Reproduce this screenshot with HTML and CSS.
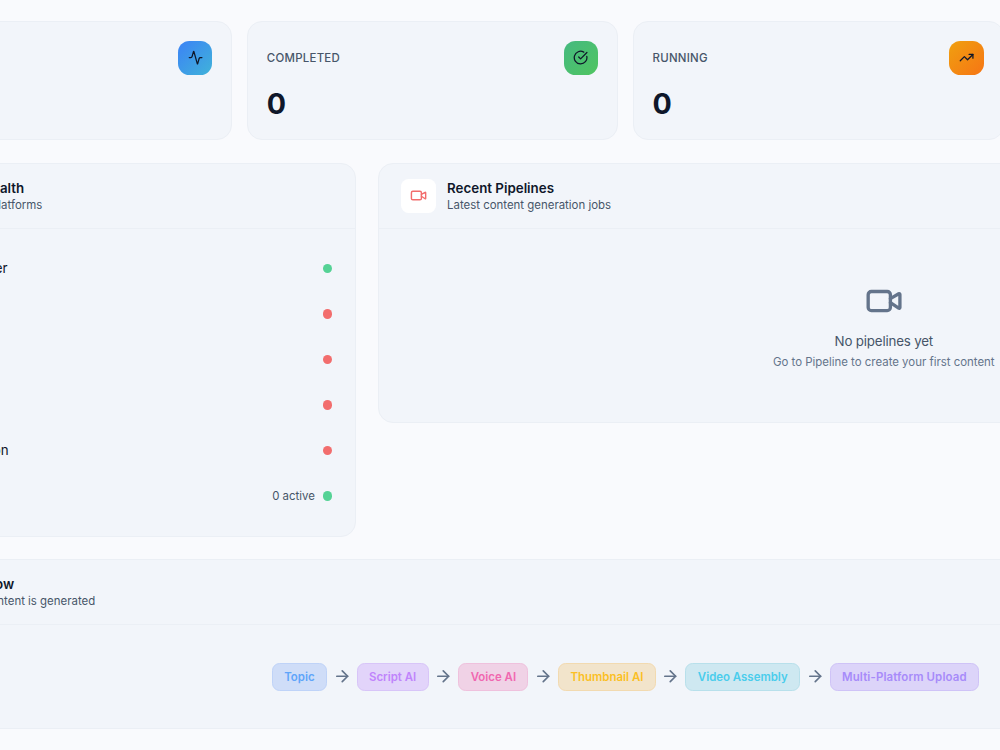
FILE: index.html
```html
<!DOCTYPE html>
<html lang="en">
<head>
    <meta charset="UTF-8">
    <meta name="viewport" content="width=device-width, initial-scale=1.0">
    <title>Dashboard</title>
    <link rel="stylesheet" href="styles.css">
</head>
<body>

    <main class="dashboard">
        <section class="stats">
            <div class="card stat">
                <div class="stat-icon blue">
                    <svg class="icon" viewBox="0 0 24 24"><path d="M22 12h-2.48a2 2 0 0 0-1.93 1.46l-2.35 8.36a.25.25 0 0 1-.48 0L9.24 2.18a.25.25 0 0 0-.48 0l-2.35 8.36A2 2 0 0 1 4.49 12H2"/></svg>
                </div>
            </div>
            <div class="card stat">
                <div>
                    <div class="stat-label">COMPLETED</div>
                    <div class="stat-value">0</div>
                </div>
                <div class="stat-icon green">
                    <svg class="icon" viewBox="0 0 24 24"><path d="M21.801 10A10 10 0 1 1 17 3.335"/><path d="m9 11 3 3L22 4"/></svg>
                </div>
            </div>
            <div class="card stat">
                <div>
                    <div class="stat-label">RUNNING</div>
                    <div class="stat-value">0</div>
                </div>
                <div class="stat-icon orange">
                    <svg class="icon" viewBox="0 0 24 24"><path d="M16 7h6v6"/><path d="m22 7-8.5 8.5-5-5L2 17"/></svg>
                </div>
            </div>
        </section>

        <section class="panels">
            <div class="card">
                <header class="panel-header">
                    <div class="panel-icon"></div>
                    <div>
                        <h2>System Health</h2>
                        <p class="tight">Connected platforms</p>
                    </div>
                </header>
                <ul class="health">
                    <li><span class="name">Server</span><span class="dot ok"></span></li>
                    <li><span class="dot"></span></li>
                    <li><span class="dot"></span></li>
                    <li><span class="dot"></span></li>
                    <li><span class="name last">Automation</span><span class="dot"></span></li>
                    <li><span class="count">0 active</span><span class="dot ok"></span></li>
                </ul>
            </div>

            <div class="card recent">
                <header class="panel-header">
                    <div class="panel-icon">
                        <svg class="icon" viewBox="0 0 24 24"><path d="m16 13 5.223 3.482a.5.5 0 0 0 .777-.416V7.87a.5.5 0 0 0-.752-.432L16 10.5"/><rect x="2" y="6" width="14" height="12" rx="2"/></svg>
                    </div>
                    <div>
                        <h2>Recent Pipelines</h2>
                        <p>Latest content generation jobs</p>
                    </div>
                </header>
                <div class="empty">
                    <svg class="icon" viewBox="0 0 24 24"><path d="m16 13 5.223 3.482a.5.5 0 0 0 .777-.416V7.87a.5.5 0 0 0-.752-.432L16 10.5"/><rect x="2" y="6" width="14" height="12" rx="2"/></svg>
                    <div class="empty-title">No pipelines yet</div>
                    <div class="empty-text">Go to Pipeline to create your first content</div>
                </div>
            </div>
        </section>

        <section class="card">
            <header class="panel-header">
                <div class="panel-icon"></div>
                <div>
                    <h2 class="tight">Pipeline Flow</h2>
                    <p class="tight">How your content is generated</p>
                </div>
            </header>
            <div class="flow">
                <span class="step topic">Topic</span>
                <svg class="icon arrow" viewBox="0 0 24 24"><path d="M5 12h14"/><path d="m12 5 7 7-7 7"/></svg>
                <span class="step script">Script AI</span>
                <svg class="icon arrow" viewBox="0 0 24 24"><path d="M5 12h14"/><path d="m12 5 7 7-7 7"/></svg>
                <span class="step voice">Voice AI</span>
                <svg class="icon arrow" viewBox="0 0 24 24"><path d="M5 12h14"/><path d="m12 5 7 7-7 7"/></svg>
                <span class="step thumbnail">Thumbnail AI</span>
                <svg class="icon arrow" viewBox="0 0 24 24"><path d="M5 12h14"/><path d="m12 5 7 7-7 7"/></svg>
                <span class="step video">Video Assembly</span>
                <svg class="icon arrow" viewBox="0 0 24 24"><path d="M5 12h14"/><path d="m12 5 7 7-7 7"/></svg>
                <span class="step upload">Multi-Platform Upload</span>
            </div>
        </section>
    </main>

</body>
</html>
```

FILE: styles.css
```css
* {
    box-sizing: border-box;
}

body {
    margin: 0;
    height: 750px;
    overflow: hidden;
    background-color: #f9fafd;
    color: #0f172a;
    font-family: Inter, "Liberation Sans", sans-serif;
}

h2, p, ul {
    margin: 0;
    padding: 0;
}

.dashboard {
    display: flex;
    flex-direction: column;
    gap: 22.8px;
    width: 1527.6px;
    margin-left: -138.4px;
    padding-top: 21.3px;
}

.card {
    background-color: #f2f5fa;
    border: 1px solid #ebeff5;
    border-radius: 15px;
}

.icon {
    display: block;
    width: 15.2px;
    height: 15.2px;
    fill: none;
    stroke: currentColor;
    stroke-width: 2;
    stroke-linecap: round;
    stroke-linejoin: round;
}

/* stats */

.stats {
    display: grid;
    grid-template-columns: repeat(4, 1fr);
    gap: 15.2px;
}

.stat {
    display: flex;
    justify-content: space-between;
    height: 119px;
    padding: 18.5px 18.8px 0 18.5px;
}

.stat-label {
    color: #475569;
    font-size: 11.43px;
    font-weight: 500;
    letter-spacing: 0.27px;
    line-height: 34.6px;
}

.stat-value {
    margin-top: 11px;
    font-size: 28.6px;
    font-weight: 700;
    line-height: 36px;
}

.stat-icon {
    display: flex;
    align-items: center;
    justify-content: center;
    width: 34.3px;
    height: 34.3px;
    margin-left: auto;
    border-radius: 11.4px;
}

.blue {
    background: linear-gradient(135deg, #3b82f6, #40b3d9);
}

.green {
    background: linear-gradient(135deg, #45b980, #50c560);
}

.orange {
    background: linear-gradient(135deg, #f0a010, #f67514);
}

/* panels */

.panels {
    display: grid;
    grid-template-columns: 493.9px 1fr;
    align-items: start;
    gap: 22.9px;
}

.panel-header {
    display: flex;
    align-items: center;
    gap: 11.4px;
    height: 64.7px;
    padding: 0 22px;
    border-bottom: 1px solid #ebeff5;
}

.panel-icon {
    display: flex;
    align-items: center;
    justify-content: center;
    width: 34.3px;
    height: 34.3px;
    border-radius: 7.6px;
    background-color: #fff;
    color: #f26d6d;
}

.panel-icon .icon {
    width: 17.1px;
    height: 17.1px;
}

.panel-header h2 {
    padding-top: 2px;
    font-size: 13.33px;
    font-weight: 600;
    line-height: 17px;
}

.panel-header p {
    color: #475569;
    font-size: 11.43px;
    line-height: 17px;
}

.tight {
    margin-left: -1.3px;
}

.health {
    padding: 17px 22.5px 16.8px 0;
    list-style: none;
}

.health li {
    display: flex;
    align-items: center;
    height: 45.5px;
}

.name {
    width: 145px;
    padding-bottom: 1px;
    font-size: 13.33px;
    text-align: right;
}

.name.last {
    width: 146px;
}

.count {
    margin-left: auto;
    color: #475569;
    font-size: 11.43px;
}

.dot {
    width: 9.5px;
    height: 9.5px;
    margin-left: auto;
    border-radius: 50%;
    background-color: #f26d6d;
}

.dot.ok {
    background-color: #55d295;
}

.count + .dot {
    margin-left: 7.6px;
}

.recent {
    height: 259.5px;
}

.empty {
    display: flex;
    flex-direction: column;
    align-items: center;
    padding-top: 53px;
    color: #64748b;
}

.empty .icon {
    width: 38.1px;
    height: 38.1px;
    stroke-width: 2.1;
}

.empty-title {
    margin-top: 11px;
    color: #475569;
    font-size: 13.33px;
    letter-spacing: -0.18px;
    line-height: 20px;
}

.empty-text {
    margin-top: 2px;
    font-size: 11.43px;
    line-height: 19px;
}

/* pipeline flow */

.flow {
    display: flex;
    align-items: center;
    justify-content: center;
    gap: 5.6px;
    height: 103px;
    color: #64748b;
}

.arrow {
    width: 18.5px;
    height: 18.5px;
    stroke-width: 2.2;
}

.step {
    padding: 0 11.4px;
    border: 1px solid;
    border-radius: 7.6px;
    font-size: 11.43px;
    font-weight: 600;
    line-height: 26px;
}

.topic {
    background-color: #cfddf8;
    border-color: #bfd3f8;
    color: #60a5fa;
}

.script {
    background-color: #e2d4fa;
    border-color: #d8c5f8;
    color: #c084fc;
}

.voice {
    background-color: #f0d2e6;
    border-color: #efc1dd;
    color: #f067b0;
}

.thumbnail {
    background-color: #f2e4cb;
    border-color: #f2dab0;
    color: #fbbf24;
}

.video {
    background-color: #cee8f1;
    border-color: #b8e0eb;
    color: #4acdec;
}

.upload {
    background-color: #dcd4f9;
    border-color: #cfc3f7;
    color: #a78bfa;
    letter-spacing: 0.13px;
}
```
